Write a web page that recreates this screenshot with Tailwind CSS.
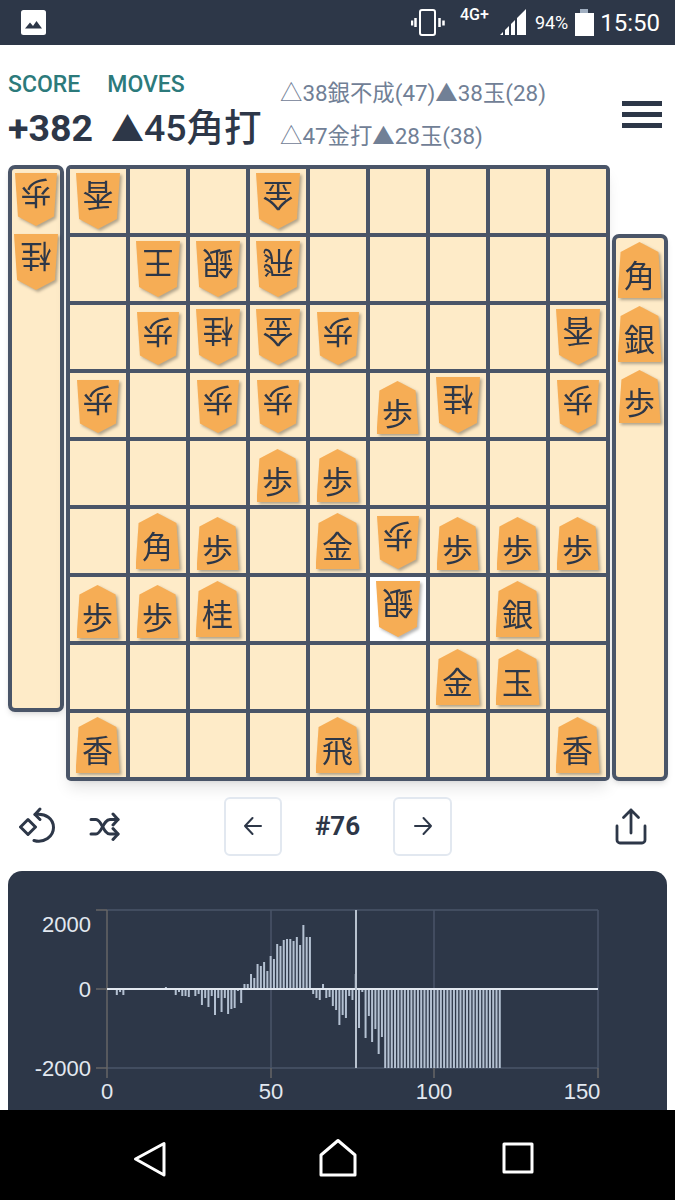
<!DOCTYPE html>
<html lang="en">
  <head>
    <meta charset="UTF-8" />
    <meta name="viewport" content="width=device-width, initial-scale=1.0" />
    <title>Shogi Replay</title>
    <script src="https://cdn.jsdelivr.net/npm/@tailwindcss/browser@4"></script>
  </head>
  <body class="bg-white text-[#2d3748] font-['Roboto','Noto_Sans_CJK_JP',sans-serif]">
    <div class="w-[675px] h-[1200px] flex flex-col overflow-hidden">
      <!-- status bar -->
      <div class="h-[45px] shrink-0 bg-[#2d3748] text-white flex items-center">
        <svg class="ml-[21px]" width="25" height="25" viewBox="0 0 25 25">
          <rect x="0" y="0" width="25" height="25" rx="2.5" fill="#fff" />
          <path d="M4 18.5 L9 12.5 L12 16 L15.5 11 L21 18.5 Z" fill="#2d3748" />
        </svg>
        <svg class="ml-[365px]" width="36" height="28" viewBox="0 0 36 28" fill="none" stroke="#fff">
          <rect x="9" y="1" width="15" height="25" rx="2" stroke-width="2" />
          <path d="M4.5 9v9M1 11.5v5M28.5 9v9M32.5 11.5v5" stroke-width="2.5" />
        </svg>
        <span class="ml-[13px] -mt-[15px] text-[16px] font-medium">4G+</span>
        <svg class="ml-[11px]" width="26" height="27" viewBox="0 0 26 27" fill="#fff">
          <path d="M0 26h3v-3zM5 26h4v-9l-4 4zM11 26h4v-15l-4 4zM17 26h9V0l-9 9z" />
        </svg>
        <span class="ml-[9px] text-[18px]">94%</span>
        <div class="ml-[6px] w-[20px] h-[27px] flex flex-col items-center">
          <div class="w-[8px] h-[4px] bg-[#a0aec0]"></div>
          <div class="w-[19px] h-[23px] bg-white"></div>
        </div>
        <span class="ml-[6px] text-[24px] leading-none">15:50</span>
      </div>

      <!-- score and moves -->
      <div class="h-[120px] shrink-0 flex">
        <div class="pl-2 pt-[27px] w-[280px] shrink-0">
          <div class="flex gap-[27px] text-[23px] leading-[26px] font-medium text-[#2c7a7b]">
            <span>SCORE</span>
            <span>MOVES</span>
          </div>
          <div class="flex items-baseline gap-[18px] mt-[7px] text-[37.5px] leading-[46px] font-bold">
            <span>+382</span>
            <span class="font-medium"><span class="text-[33px]">▲</span>45角打</span>
          </div>
        </div>
        <div class="pt-[27px] text-[22.4px] leading-[43px] text-[#718096] whitespace-nowrap">
          <div>△38銀不成(47)▲38玉(28)</div>
          <div>△47金打▲28玉(38)</div>
        </div>
        <div class="ml-auto mr-[13px] mt-[56px] w-[40px] flex flex-col gap-[6px]">
          <div class="h-[5px] bg-[#2d3748]"></div>
          <div class="h-[5px] bg-[#2d3748]"></div>
          <div class="h-[5px] bg-[#2d3748]"></div>
        </div>
      </div>

      <!-- board -->
      <div class="h-[616px] shrink-0 flex pl-[7.5px] gap-[2px]">
        <div id="handTop" class="w-[56px] h-[547px] self-start bg-[#feebc8] border-4 border-[#4a5568] rounded-[7px] shadow-md flex flex-col items-center gap-2 pt-1"></div>
        <div id="board" class="w-[544px] h-[616px] grid grid-cols-9 grid-rows-9 gap-1 p-1 bg-[#4a5568] rounded-[5px] shadow-lg"></div>
        <div id="handBottom" class="w-[56px] h-[547px] self-end bg-[#feebc8] border-4 border-[#4a5568] rounded-[7px] shadow-md flex flex-col items-center gap-2 pt-1"></div>
      </div>

      <!-- controls -->
      <div class="h-[90px] shrink-0 flex items-center pl-[19px] pr-[28px]">
        <svg class="-mt-[2px]" width="36" height="38" viewBox="19 806 36 38" fill="none" stroke="#2d3748" stroke-width="3" stroke-linecap="round" stroke-linejoin="round">
          <path d="M28 819.5 L35.5 827 L28 834.5 L20.5 827 Z" />
          <path d="M35 814.5 C46 813 53.5 819 53.5 827.5 C53.5 836.5 44 843.5 34 840.5" />
          <path d="M40 809 L35 814.5 L40 819.5" />
        </svg>
        <svg class="ml-[34px] mt-[2px]" width="32" height="30" viewBox="89 812 32 30" fill="none" stroke="#2d3748" stroke-width="3" stroke-linecap="round" stroke-linejoin="round">
          <path d="M91 819.5 H96 C102 819.5 103 834 110 834 H118" />
          <path d="M91 834 H96 C102 834 103 819.5 110 819.5 H118" />
          <path d="M113 814 L118 819.5 L113 825 M113 828.5 L118 834 L113 839.5" />
        </svg>
        <button class="ml-[103px] w-[58px] h-[59px] border-2 border-[#e2e8f0] rounded-md flex items-center justify-center">
          <svg width="20" height="20" viewBox="0 0 20 20" fill="none" stroke="#2d3748" stroke-width="2" stroke-linecap="round" stroke-linejoin="round">
            <path d="M18 10H2M9.5 2L2 10l7.5 8" />
          </svg>
        </button>
        <span class="w-[111px] text-center text-[26px] font-bold">#76</span>
        <button class="w-[59px] h-[59px] border-2 border-[#e2e8f0] rounded-md flex items-center justify-center">
          <svg width="20" height="20" viewBox="0 0 20 20" fill="none" stroke="#2d3748" stroke-width="2" stroke-linecap="round" stroke-linejoin="round">
            <path d="M2 10h16M10.5 2L18 10l-7.5 8" />
          </svg>
        </button>
        <svg class="ml-auto" width="32" height="37" viewBox="615 807 32 37" fill="none" stroke="#2d3748" stroke-width="2.8" stroke-linecap="round" stroke-linejoin="round">
          <path d="M631 832V809M623.5 816.5L631 809l7.5 7.5" />
          <path d="M617 825v14a3 3 0 0 0 3 3h22a3 3 0 0 0 3-3v-14" />
        </svg>
      </div>

      <!-- score chart -->
      <div class="flex-1 mx-2 bg-[#2d3748] rounded-t-[14px] overflow-hidden">
        <svg id="chart" width="659" height="239" viewBox="8 871 659 239" font-family="Liberation Sans, sans-serif" font-size="22" fill="#e2e8f0">
          <g stroke="#4a5568" stroke-width="1.5" fill="none">
            <path d="M107 910H598M107 1068H598M271 910V1068M434 910V1068M598 910V1068" />
          </g>
          <g stroke="#666" stroke-width="1.5" fill="none">
            <path d="M107 910V1068M96 910H107M96 989H107M96 1068H107M107 1068V1078M271 1068V1078M434 1068V1078M598 1068V1078" />
          </g>
          <g id="bars"></g>
          <path d="M107 989H598" stroke="#e2e8f0" stroke-width="2" />
          <path d="M356 910V1068" stroke="#b8c2cf" stroke-width="2" />
          <text x="91" y="932" text-anchor="end">2000</text>
          <text x="91" y="997" text-anchor="end">0</text>
          <text x="91" y="1076" text-anchor="end">-2000</text>
          <text x="107" y="1099" text-anchor="middle">0</text>
          <text x="271" y="1099" text-anchor="middle">50</text>
          <text x="434" y="1099" text-anchor="middle">100</text>
          <text x="582" y="1099" text-anchor="middle">150</text>
        </svg>
      </div>

      <!-- nav bar -->
      <div class="h-[90px] shrink-0 bg-black flex items-center pl-[133px] pt-[8px]">
        <svg width="34" height="37" viewBox="133 1141 34 37" fill="none" stroke="#fff" stroke-width="3" stroke-linejoin="round">
          <path d="M164 1143.5V1175L135.5 1159Z" />
        </svg>
        <svg class="ml-[152px] -mt-[3px]" width="38" height="39" viewBox="319 1138 38 39" fill="none" stroke="#fff" stroke-width="3" stroke-linejoin="round">
          <path d="M338 1140.5L355 1155V1175H321V1155Z" />
        </svg>
        <svg class="ml-[145px] -mt-[2px]" width="32" height="32" viewBox="502 1142 32 32" fill="none" stroke="#fff" stroke-width="3" stroke-linejoin="round">
          <rect x="504" y="1144" width="28" height="28" />
        </svg>
      </div>
    </div>

    <script>
      // [row, col, kanji, isOpponent]
      const pieces = [
        [0, 0, "香", 1], [0, 3, "金", 1],
        [1, 1, "王", 1], [1, 2, "銀", 1], [1, 3, "飛", 1],
        [2, 1, "歩", 1], [2, 2, "桂", 1], [2, 3, "金", 1], [2, 4, "歩", 1], [2, 8, "香", 1],
        [3, 0, "歩", 1], [3, 2, "歩", 1], [3, 3, "歩", 1], [3, 5, "歩", 0], [3, 6, "桂", 1], [3, 8, "歩", 1],
        [4, 3, "歩", 0], [4, 4, "歩", 0],
        [5, 1, "角", 0], [5, 2, "歩", 0], [5, 4, "金", 0], [5, 5, "歩", 1], [5, 6, "歩", 0], [5, 7, "歩", 0], [5, 8, "歩", 0],
        [6, 0, "歩", 0], [6, 1, "歩", 0], [6, 2, "桂", 0], [6, 5, "銀", 1], [6, 7, "銀", 0],
        [7, 6, "金", 0], [7, 7, "玉", 0],
        [8, 0, "香", 0], [8, 4, "飛", 0], [8, 8, "香", 0],
      ];

      function pieceHtml(kanji, isOpponent) {
        const size = kanji === "歩" ? "w-[42px] h-[53px]" : "w-[44px] h-[56px]";
        const turn = isOpponent ? "rotate-180" : "";
        return `<div class="drop-shadow-[2px_2px_1.5px_rgba(0,0,0,0.3)]"><div class="${size} ${turn} bg-[#f6ad55] [clip-path:polygon(50%_0,93%_18%,100%_100%,0_100%,7%_18%)] flex items-center justify-center pt-[7px] text-[31px] leading-none font-normal font-['Noto_Sans_CJK_JP',sans-serif]">${kanji}</div></div>`;
      }

      const board = document.getElementById("board");
      for (let r = 0; r < 9; r++) {
        for (let c = 0; c < 9; c++) {
          const p = pieces.find((x) => x[0] === r && x[1] === c);
          const bg = r === 6 && c === 5 ? "bg-white" : "bg-[#feebc8]";
          // pawns are shorter and sit a little low in the square
          let nudge = "";
          if (p && p[2] === "歩") nudge = p[3] ? "pt-[2px]" : "pt-[5px]";
          board.innerHTML += `<div class="${bg} ${nudge} flex items-center justify-center">${p ? pieceHtml(p[2], p[3]) : ""}</div>`;
        }
      }
      document.getElementById("handTop").innerHTML = pieceHtml("歩", 1) + pieceHtml("桂", 1);
      document.getElementById("handBottom").innerHTML = pieceHtml("角", 0) + pieceHtml("銀", 0) + pieceHtml("歩", 0);

      // bar heights in px, read move by move
      const scores = [
        0, 0, 0, -6, -3, -6, 1, 1, 1, -1, 0, -1, 1, -1, 1, 1, 0, 0, 2, 0, 0,
        -6, -3, -7, -7, -8, -1, -7, -5, -16, -9, -18, -7, -26, -9, -23, -9, -25, -20, -19, -2, -14,
        5, 5, 15, 11, 25, 23, 27, 18, 33, 30, 45, 43, 49, 50, 50, 48, 52, 44, 64, 52, 52,
        -5, -9, -11, 5, -9, -8, -17, -21, -36, -26, -29, -7, -11, 15, -39, -3, -49, -27, -53, -40, -65, -48,
      ];
      while (scores.length < 121) scores.push(-79);

      const bars = document.getElementById("bars");
      scores.forEach((h, i) => {
        const rect = document.createElementNS("http://www.w3.org/2000/svg", "rect");
        rect.setAttribute("x", 106 + 3.273 * i);
        rect.setAttribute("y", h > 0 ? 989 - h : 989);
        rect.setAttribute("width", 2);
        rect.setAttribute("height", Math.abs(h));
        rect.setAttribute("fill", "#b4c1d2");
        bars.appendChild(rect);
      });
    </script>
  </body>
</html>
